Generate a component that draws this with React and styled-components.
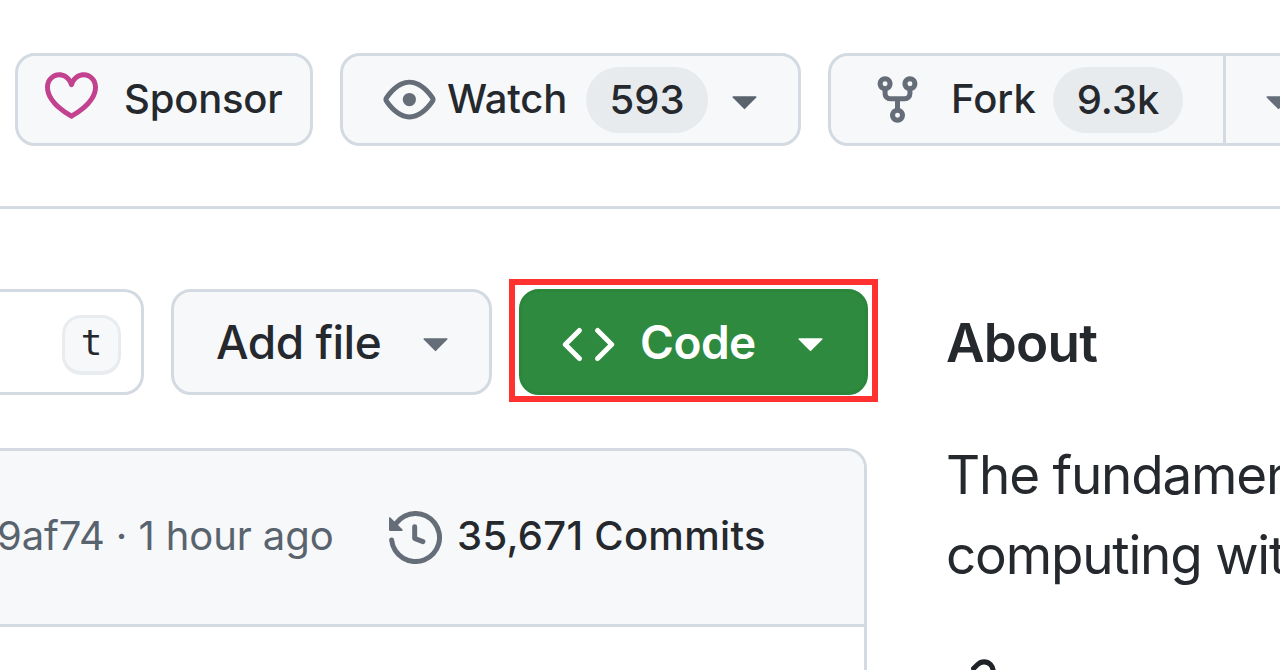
import React from "react";
import styled, { createGlobalStyle } from "styled-components";

const paths = {
  heart:
    "m8 14.25.345.666a.75.75 0 0 1-.69 0l-.008-.004-.018-.01a7.152 7.152 0 0 1-.31-.17 22.055 22.055 0 0 1-3.434-2.414C2.045 10.731 0 8.35 0 5.5 0 2.836 2.086 1 4.25 1 5.797 1 7.153 1.802 8 3.02 8.847 1.802 10.203 1 11.75 1 13.914 1 16 2.836 16 5.5c0 2.85-2.045 5.231-3.885 6.818a22.066 22.066 0 0 1-3.744 2.584l-.018.01-.006.003h-.002ZM4.25 2.5c-1.336 0-2.75 1.164-2.75 3 0 2.15 1.58 4.144 3.365 5.682A20.58 20.58 0 0 0 8 13.393a20.58 20.58 0 0 0 3.135-2.211C12.92 9.644 14.5 7.65 14.5 5.5c0-1.836-1.414-3-2.75-3-1.373 0-2.609.986-3.029 2.456a.749.749 0 0 1-1.442 0C6.859 3.486 5.623 2.5 4.25 2.5Z",
  eye: "M8 2c1.981 0 3.671.992 4.933 2.078 1.27 1.091 2.187 2.345 2.637 3.023a1.62 1.62 0 0 1 0 1.798c-.45.678-1.367 1.932-2.637 3.023C11.67 13.008 9.981 14 8 14c-1.981 0-3.671-.992-4.933-2.078C1.797 10.83.88 9.576.43 8.898a1.62 1.62 0 0 1 0-1.798c.45-.677 1.367-1.931 2.637-3.022C4.33 2.992 6.019 2 8 2ZM1.679 7.932a.12.12 0 0 0 0 .136c.411.622 1.241 1.75 2.366 2.717C5.176 11.758 6.527 12.5 8 12.5c1.473 0 2.825-.742 3.955-1.715 1.124-.967 1.954-2.096 2.366-2.717a.12.12 0 0 0 0-.136c-.412-.621-1.242-1.75-2.366-2.717C10.824 4.242 9.473 3.5 8 3.5c-1.473 0-2.825.742-3.955 1.715-1.124.967-1.954 2.096-2.366 2.717ZM8 10a2 2 0 1 1-.001-3.999A2 2 0 0 1 8 10Z",
  fork: "M5 5.372v.878c0 .414.336.75.75.75h4.5a.75.75 0 0 0 .75-.75v-.878a2.25 2.25 0 1 1 1.5 0v.878a2.25 2.25 0 0 1-2.25 2.25h-1.5v2.128a2.251 2.251 0 1 1-1.5 0V8.5h-1.5A2.25 2.25 0 0 1 3.5 6.25v-.878a2.25 2.25 0 1 1 1.5 0ZM5 3.25a.75.75 0 1 0-1.5 0 .75.75 0 0 0 1.5 0Zm6.75.75a.75.75 0 1 0 0-1.5.75.75 0 0 0 0 1.5Zm-3 8.75a.75.75 0 1 0-1.5 0 .75.75 0 0 0 1.5 0Z",
  code: "m11.28 3.22 4.25 4.25a.75.75 0 0 1 0 1.06l-4.25 4.25a.749.749 0 0 1-1.275-.326.749.749 0 0 1 .215-.734L13.94 8l-3.72-3.72a.749.749 0 0 1 .326-1.275.749.749 0 0 1 .734.215Zm-6.56 0a.751.751 0 0 1 1.042.018.751.751 0 0 1 .018 1.042L2.06 8l3.72 3.72a.749.749 0 0 1-.326 1.275.749.749 0 0 1-.734-.215L.47 8.53a.75.75 0 0 1 0-1.06Z",
  history:
    "m.427 1.927 1.215 1.215a8.002 8.002 0 1 1-1.6 5.685.75.75 0 1 1 1.493-.154 6.5 6.5 0 1 0 1.18-4.458l1.358 1.358A.25.25 0 0 1 3.896 6H.25A.25.25 0 0 1 0 5.75V2.104a.25.25 0 0 1 .427-.177ZM7.75 4a.75.75 0 0 1 .75.75v2.992l2.028.812a.75.75 0 0 1-.557 1.392l-2.5-1A.751.751 0 0 1 7 8.25v-3.5A.75.75 0 0 1 7.75 4Z",
  triangle:
    "m4.427 7.427 3.396 3.396a.25.25 0 0 0 .354 0l3.396-3.396A.25.25 0 0 0 11.396 7H4.604a.25.25 0 0 0-.177.427Z",
  link: "m7.775 3.275 1.25-1.25a3.5 3.5 0 1 1 4.95 4.95l-2.5 2.5a3.5 3.5 0 0 1-4.95 0 .751.751 0 0 1 .018-1.042.751.751 0 0 1 1.042-.018 1.998 1.998 0 0 0 2.83 0l2.5-2.5a2.002 2.002 0 0 0-2.83-2.83l-1.25 1.25a.751.751 0 0 1-1.042-.018.751.751 0 0 1-.018-1.042Z",
};

const Icon = ({ name, ...rest }) => (
  <IconSvg viewBox="0 0 16 16" aria-hidden="true" {...rest}>
    <path d={paths[name]} />
  </IconSvg>
);

export default function App() {
  return (
    <Page>
      <GlobalStyle />
      <RepoHeader>
        <SponsorButton>
          <Icon name="heart" $color="#c2428f" $up={8} />
          <Label $width={160} $left={26} $up={2} $track={-0.2}>
            Sponsor
          </Label>
        </SponsorButton>
        <WatchButton>
          <Icon name="eye" />
          <Label $width={121} $left={11} $up={2} $track={-0.2}>
            Watch
          </Label>
          <Counter $width={122} $left={18}>
            593
          </Counter>
          <Icon name="triangle" $color="#59636e" $left={10} />
        </WatchButton>
        <ForkGroup>
          <ForkButton>
            <Icon name="fork" $left={1} />
            <Label $width={88} $left={27} $up={2}>
              Fork
            </Label>
            <Counter $width={130} $left={14}>
              9.3k
            </Counter>
          </ForkButton>
          <ForkMenu>
            <Icon name="triangle" />
          </ForkMenu>
        </ForkGroup>
      </RepoHeader>

      <Main>
        <Files>
          <Toolbar>
            <SearchBox>
              <Kbd>t</Kbd>
            </SearchBox>
            <AddButton>
              <Label $size={46} $width={168} $track={-0.5}>
                Add file
              </Label>
              <Icon name="triangle" $left={25} $up={1} />
            </AddButton>
            <CodeWrapper>
              <CodeButton>
                <Icon name="code" $color="#fff" $down={5} />
                <Label $size={46} $weight={600} $color="#fff" $width={119} $left={25} $track={-0.5}>
                  Code
                </Label>
                <Icon name="triangle" $color="#fff" $left={25} $up={1} />
              </CodeButton>
              <Highlight />
            </CodeWrapper>
          </Toolbar>

          <FileTable>
            <CommitBar>
              <Label $weight={400} $color="#59636e" $left={-3} $width={392} $up={3} $track={-0.1}>
                9af74 · 1 hour ago
              </Label>
              <Icon name="history" />
              <Label $width={310} $left={15} $up={3} $track={0.3}>
                35,671 Commits
              </Label>
            </CommitBar>
          </FileTable>
        </Files>

        <About>
          <h2>About</h2>
          <p>
            The fundamen
            <br />
            computing wit
          </p>
          <Icon name="link" $color="#1f2328" />
        </About>
      </Main>
    </Page>
  );
}

const GlobalStyle = createGlobalStyle`
  * {
    box-sizing: border-box;
  }
  body {
    margin: 0;
    background: #fff;
    color: #25292e;
    font-family: Inter, "Liberation Sans", sans-serif;
    overflow: hidden;
  }
`;

const Page = styled.div`
  width: 1280px;
  height: 670px;
  overflow: hidden;
`;

const IconSvg = styled.svg`
  flex: none;
  display: block;
  width: 53px;
  height: 53px;
  fill: ${(props) => props.$color || "#646d78"};
  margin-left: ${(props) => props.$left || 0}px;
  margin-bottom: ${(props) => props.$up || 0}px;
  margin-top: ${(props) => props.$down || 0}px;
`;

const Label = styled.span`
  flex: none;
  width: ${(props) => props.$width}px;
  margin-left: ${(props) => props.$left || 0}px;
  margin-bottom: ${(props) => props.$up || 0}px;
  color: ${(props) => props.$color || "#25292e"};
  font-size: ${(props) => props.$size || 40}px;
  font-weight: ${(props) => props.$weight || 500};
  letter-spacing: ${(props) => props.$track || 0}px;
  line-height: 60px;
  white-space: nowrap;
`;

const Counter = styled.span`
  flex: none;
  width: ${(props) => props.$width}px;
  height: 66px;
  margin-left: ${(props) => props.$left}px;
  border-radius: 33px;
  background: #e7ebee;
  font-size: 40px;
  font-weight: 500;
  line-height: 65px;
  text-align: center;
`;

const Button = styled.div`
  display: flex;
  align-items: center;
  flex: none;
  border: 3px solid #d3dae1;
  border-radius: 20px;
  background: #f6f8fa;
`;

const RepoHeader = styled.header`
  display: flex;
  height: 209px;
  padding: 53px 0 60px 15px;
  border-bottom: 3px solid #d3dae1;
`;

const SponsorButton = styled(Button)`
  width: 298px;
  padding-left: 27px;
`;

const WatchButton = styled(Button)`
  width: 461px;
  margin-left: 27px;
  padding-left: 40px;
`;

const ForkGroup = styled.div`
  display: flex;
  flex: none;
  margin-left: 27px;
`;

const ForkButton = styled(Button)`
  width: 398px;
  padding-left: 39px;
  border-radius: 20px 0 0 20px;
`;

const ForkMenu = styled(Button)`
  width: 106px;
  padding-left: 26px;
  border-left: 0;
  border-radius: 0 20px 20px 0;
`;

const Main = styled.main`
  display: flex;
`;

const Files = styled.section`
  flex: none;
  width: 868px;
  padding-top: 80px;
`;

const Toolbar = styled.div`
  display: flex;
  height: 106px;
`;

const SearchBox = styled.div`
  display: flex;
  align-items: center;
  justify-content: flex-end;
  width: 144px;
  padding: 6px 20px 0 0;
  border: 3px solid #d3dae1;
  border-left: 0;
  border-radius: 0 20px 20px 0;
`;

const Kbd = styled.kbd`
  width: 59px;
  height: 60px;
  border: 3px solid #e9ecef;
  border-bottom-width: 4px;
  border-radius: 19px;
  background: #f6f8fa;
  font-family: "DejaVu Sans Mono", monospace;
  font-size: 36px;
  line-height: 50px;
  text-align: center;
`;

const AddButton = styled(Button)`
  width: 321px;
  margin-left: 27px;
  padding-left: 42px;
`;

const CodeWrapper = styled.div`
  position: relative;
  display: flex;
  margin-left: 27px;
`;

const CodeButton = styled(Button)`
  width: 349px;
  padding-left: 40px;
  border-color: #2b863c;
  background: #2d8a3e;
`;

/* Red frame drawn around the Code button */
const Highlight = styled.div`
  position: absolute;
  inset: -10px -10px -7px;
  border: 6px solid #ff3131;
`;

const FileTable = styled.div`
  width: 867px;
  height: 240px;
  margin-top: 53px;
  border: 3px solid #d3dae1;
  border-left: 0;
  border-top-right-radius: 20px;
`;

const CommitBar = styled.div`
  display: flex;
  align-items: center;
  height: 176px;
  border-bottom: 3px solid #d3dae1;
  border-top-right-radius: 17px;
  background: #f6f8fa;
`;

const About = styled.aside`
  flex: none;
  width: 400px;
  margin-left: 78px;
  padding-top: 104px;

  h2 {
    margin: 0;
    font-size: 53px;
    font-weight: 600;
    letter-spacing: -0.8px;
    line-height: 60px;
  }

  p {
    margin: 62px 0 61px;
    font-size: 53px;
    letter-spacing: -1.2px;
    line-height: 80px;
    white-space: nowrap;
  }
`;
